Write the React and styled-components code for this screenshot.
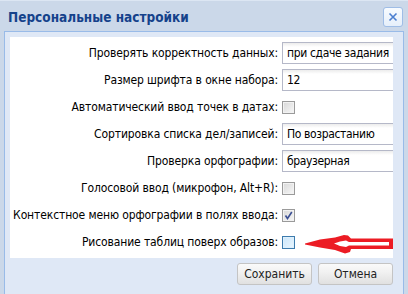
import React from "react";
import styled, { createGlobalStyle } from "styled-components";

const Global = createGlobalStyle`
  html, body { margin: 0; padding: 0; }
  body {
    background: #cbd8e9;
    font-family: "DejaVu Sans Condensed", "DejaVu Sans", sans-serif;
    overflow: hidden;
  }
`;

const Window = styled.div`
  width: 408px;
  height: 294px;
  background: #cbd8e9;
  border-top: 1px solid #dce6f3;
  box-sizing: border-box;
  display: flex;
  flex-direction: column;
`;

const Header = styled.div`
  height: 30px;
  display: flex;
  align-items: center;
  justify-content: space-between;
  padding: 0 5px 0 8px;
`;

const Title = styled.div`
  font-family: "DejaVu Sans Condensed", "DejaVu Sans", sans-serif;
  font-weight: bold;
  font-size: 13.5px;
  color: #15428b;
  margin-top: 2px;
`;

const CloseBtn = styled.div`
  width: 18px;
  height: 18px;
  border: 1px solid #9fbde6;
  border-radius: 3px;
  background: linear-gradient(#f7fbff, #e6effa);
  display: flex;
  align-items: center;
  justify-content: center;
  margin-top: 2px;
`;

const Frame = styled.div`
  flex: 1;
  margin: 0 4px;
  border: 1px solid #99bbe8;
  border-bottom: none;
  background: #dfe8f6;
  padding: 5px 10px 0 5px;
  display: flex;
  flex-direction: column;
`;

const Form = styled.div`
  position: relative;
  background: #fff;
  height: 221px;
  box-sizing: border-box;
  padding: 5px 0 5px 0;
  overflow: hidden;
  display: flex;
  flex-direction: column;
  gap: 5px;
`;

const Row = styled.div`
  display: flex;
  align-items: center;
  height: 22px;
`;

const Label = styled.div`
  width: 272px;
  flex: none;
  box-sizing: border-box;
  padding-right: 4px;
  text-align: right;
  font-size: 12px;
  letter-spacing: -0.12px;
  color: #000;
  white-space: nowrap;
`;

const TextField = styled.div`
  flex: none;
  width: 140px;
  height: 22px;
  box-sizing: border-box;
  border: 1px solid #b5b8c8;
  background: linear-gradient(#ececec, #fff 4px, #fff);
  padding: 0 4px;
  display: flex;
  align-items: center;
  font-size: 12px;
  letter-spacing: -0.35px;
  color: #000;
  white-space: nowrap;
`;

const Check = styled.div`
  width: 13px;
  height: 13px;
  box-sizing: border-box;
  border: 1px solid ${(p) => (p.$hover ? "#3d7bad" : "#9a9a9a")};
  background: ${(p) =>
    p.$hover
      ? "linear-gradient(135deg, #cbe6fa, #eaf6fe)"
      : "linear-gradient(135deg, #d8d8d8, #f7f7f7)"};
  box-shadow: inset 0 0 0 1px ${(p) => (p.$hover ? "#def0fc" : "#f2f2f2")};
  display: flex;
  align-items: center;
  justify-content: center;
`;

const Arrow = styled.svg`
  position: absolute;
  left: 294px;
  top: 197px;
`;

const Footer = styled.div`
  display: flex;
  justify-content: flex-end;
  gap: 6px;
  margin-top: 5px;
`;

const Button = styled.div`
  width: 75px;
  height: 22px;
  box-sizing: border-box;
  border: 1px solid #c4c4c4;
  border-radius: 3px;
  background: linear-gradient(#fafafa, #f0f0f0 45%, #e0e0e0);
  display: flex;
  align-items: center;
  justify-content: center;
  font-size: 12px;
  color: #222;
`;

const rows = [
  { label: "Проверять корректность данных:", value: "при сдаче задания" },
  { label: "Размер шрифта в окне набора:", value: "12" },
  { label: "Автоматический ввод точек в датах:", check: "off" },
  { label: "Сортировка списка дел/записей:", value: "По возрастанию" },
  { label: "Проверка орфографии:", value: "браузерная" },
  { label: "Голосовой ввод (микрофон, Alt+R):", check: "off" },
  { label: "Контекстное меню орфографии в полях ввода:", check: "on" },
  { label: "Рисование таблиц поверх образов:", check: "hover" },
];

export default function App() {
  return (
    <>
      <Global />
      <Window>
        <Header>
          <Title>Персональные настройки</Title>
          <CloseBtn>
            <svg width="10" height="10" viewBox="0 0 10 10">
              <path d="M1.5 1.5 L8.5 8.5 M8.5 1.5 L1.5 8.5" stroke="#4a7fd0" strokeWidth="1.6" />
            </svg>
          </CloseBtn>
        </Header>
        <Frame>
          <Form>
            {rows.map((r) => (
              <Row key={r.label}>
                <Label>{r.label}</Label>
                {r.value !== undefined ? (
                  <TextField>{r.value}</TextField>
                ) : (
                  <Check $hover={r.check === "hover"}>
                    {r.check === "on" && (
                      <svg width="9" height="9" viewBox="0 0 9 9">
                        <path d="M1.5 4.5 L3.5 7.5 L7.8 1" stroke="#3b4f93" strokeWidth="1.6" fill="none" />
                      </svg>
                    )}
                  </Check>
                )}
              </Row>
            ))}
            <Arrow width="92" height="22" viewBox="304 235 92 22">
              <path
                d="M305 244.5 L320 240.5 L335 238.5 L344 236 L348 236.5 L351 239.5 L393 239.5 L393 250 L351 250 L350 253 L345 254.5 L335 251 L320 248.5 L305 245.5 Z"
                fill="#ec1c24"
              />
              <path
                d="M334 244.5 L340 242.5 L346 241.5 L349 243 L389 243 L389 246.5 L349 246.5 L346 248 L340 247 Z"
                fill="#fff"
              />
            </Arrow>
          </Form>
          <Footer>
            <Button>Сохранить</Button>
            <Button>Отмена</Button>
          </Footer>
        </Frame>
      </Window>
    </>
  );
}
